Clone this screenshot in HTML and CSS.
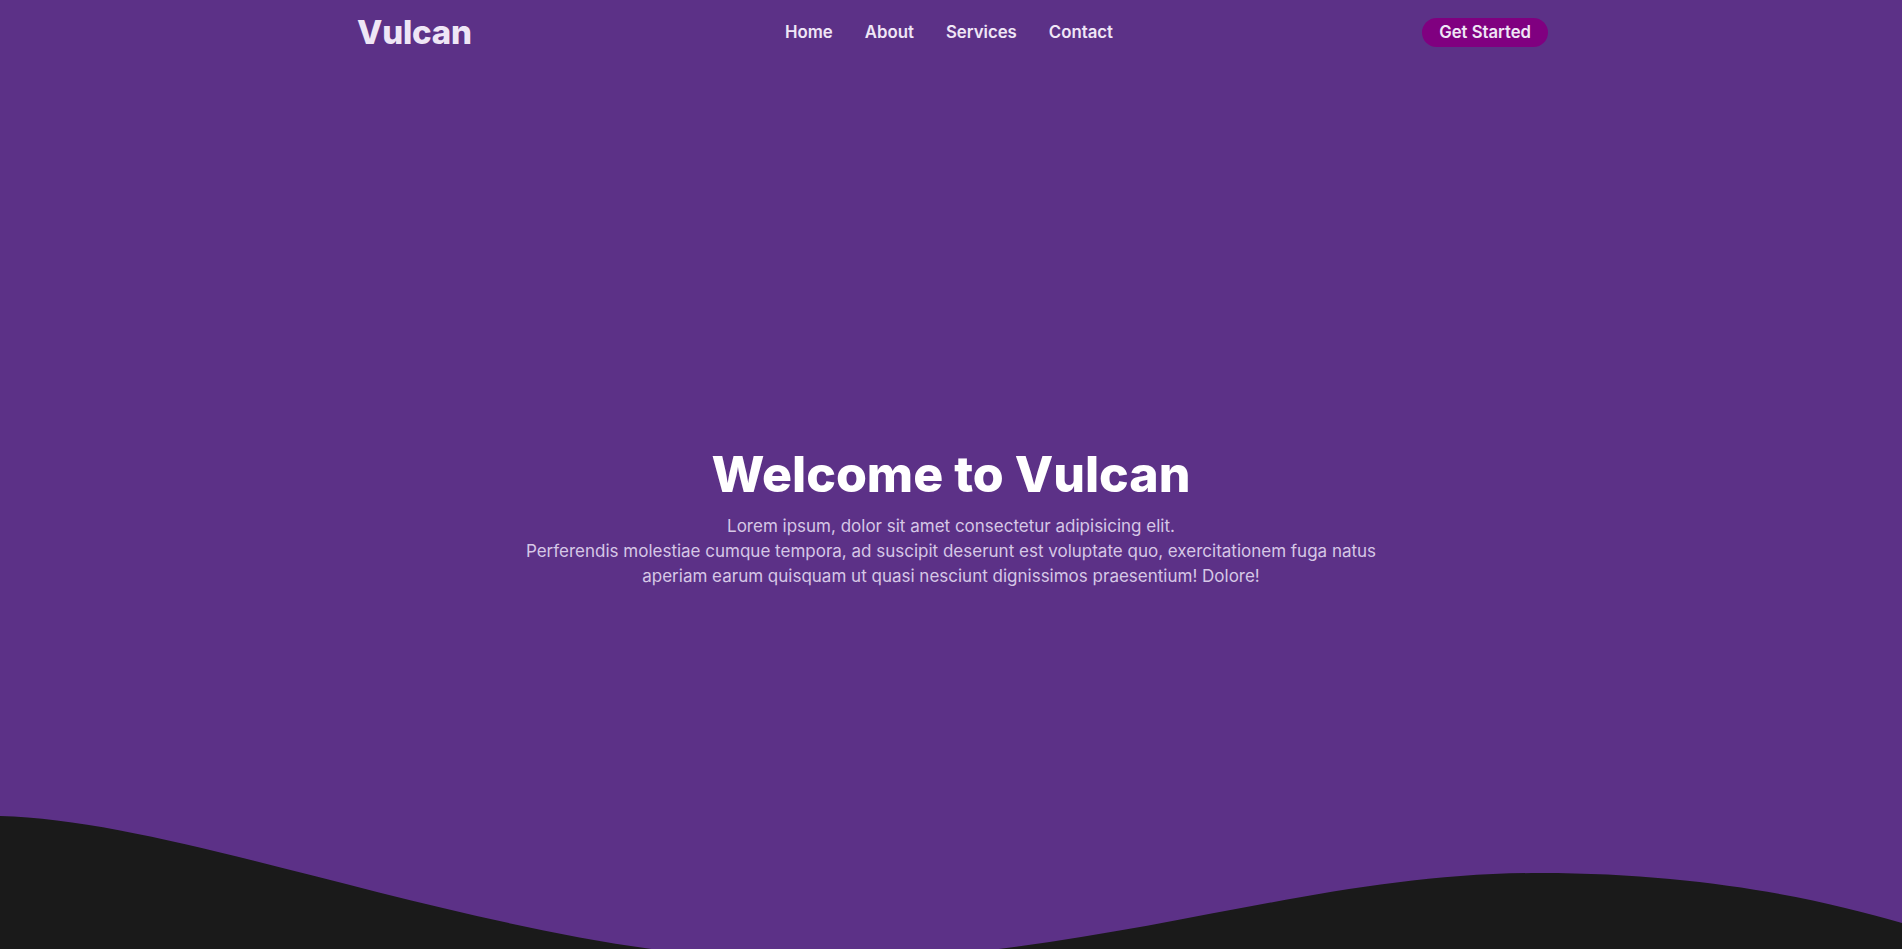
FILE: index.html
```html
<!DOCTYPE html>
<html lang="en">
<head>
<meta charset="utf-8">
<title>Vulcan</title>
<link rel="stylesheet" href="styles.css">
</head>
<body>
<div class="page">
  <header class="header">
    <div class="container header-inner">
      <a class="logo" href="#">Vulcan</a>
      <nav>
        <ul class="nav">
          <li><a href="#">Home</a></li>
          <li><a href="#">About</a></li>
          <li><a href="#">Services</a></li>
          <li><a href="#">Contact</a></li>
        </ul>
      </nav>
      <a class="btn" href="#">Get Started</a>
    </div>
  </header>
  <main class="hero">
    <h1 class="hero-title">Welcome to Vulcan</h1>
    <p class="hero-text">Lorem ipsum, dolor sit amet consectetur adipisicing elit.<br>Perferendis molestiae cumque tempora, ad suscipit deserunt est voluptate quo, exercitationem fuga natus<br>aperiam earum quisquam ut quasi nesciunt dignissimos praesentium! Dolore!</p>
  </main>
  <svg class="wave" viewBox="0 0 1902 140" preserveAspectRatio="none" aria-hidden="true">
    <path d="M0,7 C200,12 520,152 810,152 C1100,152 1300,64 1540,64 C1700,64 1820,90 1902,114 L1902,160 L0,160 Z" fill="#1a1a1a"/>
  </svg>
</div>
</body>
</html>
```

FILE: styles.css
```css
* { box-sizing: border-box; }
html, body { margin: 0; padding: 0; }
body {
  background: #5c3187;
  font-family: "Inter", "Noto Sans", sans-serif;
  color: #efe6f6;
}
.page {
  height: 100vh;
  display: flex;
  flex-direction: column;
  overflow: hidden;
}
.container {
  width: 1200px;
  margin: 0 auto;
}
.header-inner {
  height: 64px;
  display: flex;
  align-items: center;
  justify-content: space-between;
}
.logo {
  font-size: 33px;
  font-weight: 800;
  color: #efe6f6;
  text-decoration: none;
  letter-spacing: -0.2px;
  padding-left: 6px;
}
.nav {
  list-style: none;
  margin: 0;
  padding: 0 0 0 4px;
  display: flex;
  gap: 32px;
}
.nav a {
  color: #efe6f6;
  text-decoration: none;
  font-size: 16.8px;
  font-weight: 600;
}
.btn {
  background: #800080;
  color: #efe6f6;
  text-decoration: none;
  font-size: 16.7px;
  font-weight: 600;
  height: 29px;
  padding: 0 17px;
  border-radius: 15px;
  display: flex;
  align-items: center;
  margin-right: 3px;
}
.hero {
  flex: 1;
  display: flex;
  flex-direction: column;
  align-items: center;
  justify-content: center;
  text-align: center;
  padding-top: 160px;
}
.hero-title {
  margin: 0 0 10px;
  font-size: 50px;
  font-weight: 800;
  color: #ffffff;
  line-height: 1.2;
}
.hero-text {
  margin: 0;
  font-size: 17px;
  line-height: 25px;
  color: #d6c7e6;
}
.wave {
  display: block;
  width: 100%;
  height: 140px;
  flex-shrink: 0;
}
```
